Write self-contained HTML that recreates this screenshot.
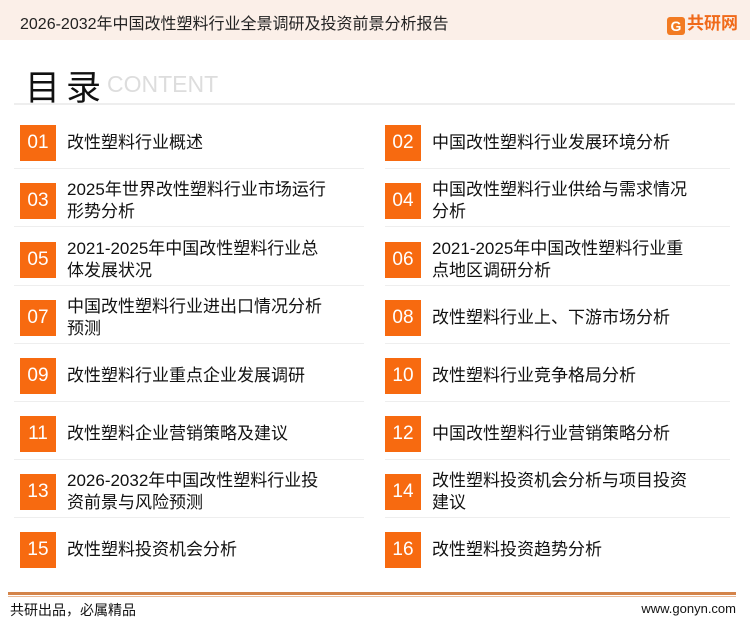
<!DOCTYPE html>
<html><head><meta charset="utf-8"><style>
*{margin:0;padding:0;box-sizing:border-box}
body{width:750px;height:622px;background:#fff;position:relative;overflow:hidden;font-family:"Liberation Sans","Noto Sans CJK SC",sans-serif;color:#111}
.hdr{position:absolute;left:0;top:0;width:750px;height:40px;background:#fbefe8}
.hdr .t{position:absolute;left:20px;top:10px;font-size:16px;color:#222}
.logo{position:absolute;left:667px;top:9px;font-size:17px;font-weight:bold;color:#f06a1a}
.logo span{display:inline-block;width:18px;height:18px;background:#f27b22;border-radius:3px;color:#fff;font-size:14px;text-align:center;line-height:18px;margin-right:2px;vertical-align:-2px}
.ttl{position:absolute;left:25px;top:60px;font-size:35px;letter-spacing:6px}
.ct{position:absolute;left:107px;top:71px;font-size:23px;color:#ddd}
.hl{position:absolute;left:14px;top:103px;width:721px;height:2px;background:#eee}
.it{position:absolute;height:36px}
.n{position:absolute;left:0;top:0;width:36px;height:36px;background:#f76a10;color:#fff;font-size:19px;text-align:center;line-height:36px}
.tx{position:absolute;left:47px;font-size:17px;line-height:22px;white-space:nowrap}
.sep{position:absolute;height:1px;background:#eee}
.f1{position:absolute;left:8px;top:592px;width:728px;height:3px;background:#d4844a}
.f2{position:absolute;left:8px;top:596px;width:728px;height:1px;background:#e9b997}
.fl{position:absolute;left:10px;top:600px;font-size:14px}
.fr{position:absolute;right:14px;top:601px;font-size:13px}
</style></head><body>
<div class="hdr"><div class="t">2026-2032年中国改性塑料行业全景调研及投资前景分析报告</div><div class="logo"><span>G</span>共研网</div></div>
<div class="ttl">目录</div><div class="ct">CONTENT</div><div class="hl"></div>

<div class="it" style="left:20px;top:125px"><div class="n">01</div><div class="tx" style="top:7px">改性塑料行业概述</div></div>
<div class="it" style="left:385px;top:125px"><div class="n">02</div><div class="tx" style="top:7px">中国改性塑料行业发展环境分析</div></div>
<div class="it" style="left:20px;top:183px"><div class="n">03</div><div class="tx" style="top:-4px">2025年世界改性塑料行业市场运行<br>形势分析</div></div>
<div class="it" style="left:385px;top:183px"><div class="n">04</div><div class="tx" style="top:-4px">中国改性塑料行业供给与需求情况<br>分析</div></div>
<div class="it" style="left:20px;top:242px"><div class="n">05</div><div class="tx" style="top:-4px">2021-2025年中国改性塑料行业总<br>体发展状况</div></div>
<div class="it" style="left:385px;top:242px"><div class="n">06</div><div class="tx" style="top:-4px">2021-2025年中国改性塑料行业重<br>点地区调研分析</div></div>
<div class="it" style="left:20px;top:300px"><div class="n">07</div><div class="tx" style="top:-4px">中国改性塑料行业进出口情况分析<br>预测</div></div>
<div class="it" style="left:385px;top:300px"><div class="n">08</div><div class="tx" style="top:7px">改性塑料行业上、下游市场分析</div></div>
<div class="it" style="left:20px;top:358px"><div class="n">09</div><div class="tx" style="top:7px">改性塑料行业重点企业发展调研</div></div>
<div class="it" style="left:385px;top:358px"><div class="n">10</div><div class="tx" style="top:7px">改性塑料行业竞争格局分析</div></div>
<div class="it" style="left:20px;top:416px"><div class="n">11</div><div class="tx" style="top:7px">改性塑料企业营销策略及建议</div></div>
<div class="it" style="left:385px;top:416px"><div class="n">12</div><div class="tx" style="top:7px">中国改性塑料行业营销策略分析</div></div>
<div class="it" style="left:20px;top:474px"><div class="n">13</div><div class="tx" style="top:-4px">2026-2032年中国改性塑料行业投<br>资前景与风险预测</div></div>
<div class="it" style="left:385px;top:474px"><div class="n">14</div><div class="tx" style="top:-4px">改性塑料投资机会分析与项目投资<br>建议</div></div>
<div class="it" style="left:20px;top:532px"><div class="n">15</div><div class="tx" style="top:7px">改性塑料投资机会分析</div></div>
<div class="it" style="left:385px;top:532px"><div class="n">16</div><div class="tx" style="top:7px">改性塑料投资趋势分析</div></div>

<div class="sep" style="left:14px;top:168px;width:350px"></div><div class="sep" style="left:385px;top:168px;width:345px"></div>
<div class="sep" style="left:14px;top:226px;width:350px"></div><div class="sep" style="left:385px;top:226px;width:345px"></div>
<div class="sep" style="left:14px;top:285px;width:350px"></div><div class="sep" style="left:385px;top:285px;width:345px"></div>
<div class="sep" style="left:14px;top:343px;width:350px"></div><div class="sep" style="left:385px;top:343px;width:345px"></div>
<div class="sep" style="left:14px;top:401px;width:350px"></div><div class="sep" style="left:385px;top:401px;width:345px"></div>
<div class="sep" style="left:14px;top:459px;width:350px"></div><div class="sep" style="left:385px;top:459px;width:345px"></div>
<div class="sep" style="left:14px;top:517px;width:350px"></div><div class="sep" style="left:385px;top:517px;width:345px"></div>

<div class="f1"></div><div class="f2"></div>
<div class="fl">共研出品，必属精品</div><div class="fr">www.gonyn.com</div>
</body></html>
